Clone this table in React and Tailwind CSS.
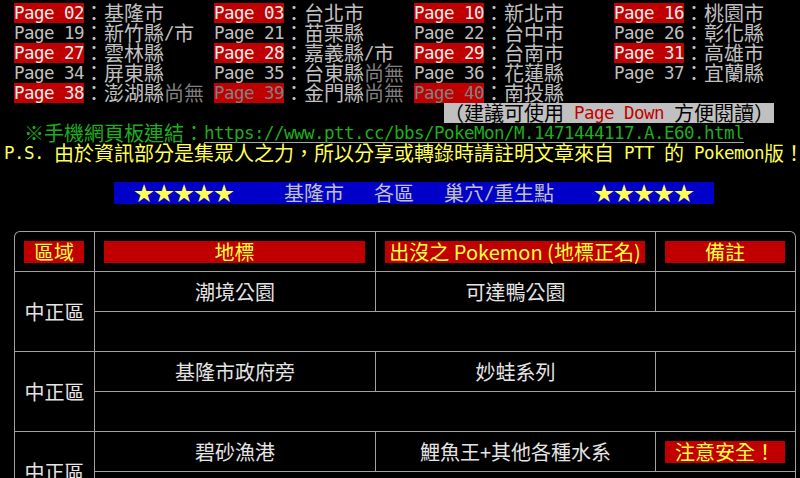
import React from "react";

const WIDE = /[\u2E80-\u9FFF\uF900-\uFAFF\uFE30-\uFE4F\uFF00-\uFF60\u203B\u2605]/;

// display width in terminal columns (CJK = 2, ascii = 1)
const width = (s) => [...s].reduce((n, ch) => n + (WIDE.test(ch) ? 2 : 1), 0);

// splits a string into ascii / full-width runs so each run gets its own font
function T({ s }) {
  const runs = [];
  for (const ch of s) {
    const w = WIDE.test(ch);
    const last = runs[runs.length - 1];
    if (last && last.w === w) last.t += ch;
    else runs.push({ w, t: ch });
  }
  return runs.map((r, i) =>
    r.w ? (
      <span key={i} className="relative top-[2px] tracking-normal font-['Noto_Sans_CJK_TC',sans-serif] text-[20px] leading-[14px]">
        {r.t}
      </span>
    ) : (
      <span key={i}>{r.t}</span>
    )
  );
}

function Box({ className = "", children }) {
  return <span className={"inline-block h-[20px] align-top " + className}>{children}</span>;
}

function Group({ n, name, note, hl, dim }) {
  const used = 7 + width("：" + name + (note || ""));
  const tone = hl ? (dim ? "bg-[#c00000] text-[#808080]" : "bg-[#c00000] text-[#ececec]") : "";
  return (
    <>
      <Box className={tone}>Page {n}</Box>
      <T s={"：" + name} />
      {note && (
        <span className="text-[#808080]">
          <T s={note} />
        </span>
      )}
      <span>{" ".repeat(Math.max(0, 20 - used))}</span>
    </>
  );
}

const pages = [
  [
    { n: "02", name: "基隆市", hl: true },
    { n: "03", name: "台北市", hl: true },
    { n: "10", name: "新北市", hl: true },
    { n: "16", name: "桃園市", hl: true },
  ],
  [
    { n: "19", name: "新竹縣/市" },
    { n: "21", name: "苗栗縣" },
    { n: "22", name: "台中市" },
    { n: "26", name: "彰化縣" },
  ],
  [
    { n: "27", name: "雲林縣", hl: true },
    { n: "28", name: "嘉義縣/市", hl: true },
    { n: "29", name: "台南市", hl: true },
    { n: "31", name: "高雄市", hl: true },
  ],
  [
    { n: "34", name: "屏東縣" },
    { n: "35", name: "台東縣", note: "尚無" },
    { n: "36", name: "花蓮縣" },
    { n: "37", name: "宜蘭縣" },
  ],
  [
    { n: "38", name: "澎湖縣", note: "尚無", hl: true },
    { n: "39", name: "金門縣", note: "尚無", hl: true, dim: true },
    { n: "40", name: "南投縣", hl: true, dim: true },
  ],
];

const rows = [
  { area: "中正區", spot: "潮境公園", mon: "可達鴨公園" },
  { area: "中正區", spot: "基隆市政府旁", mon: "妙蛙系列" },
  { area: "中正區", spot: "碧砂漁港", mon: "鯉魚王+其他各種水系", note: "注意安全！" },
];

function Line({ children }) {
  return <div className="h-[20px] leading-[20px] whitespace-pre">{children}</div>;
}

function Head({ children, className = "" }) {
  return (
    <div className={"bg-black flex items-center pl-[9px] pr-[10px] " + className}>
      <div className="flex-1 h-[22px] bg-[#c00000] text-[#ffff40] flex items-center justify-center leading-none whitespace-pre">
        {children}
      </div>
    </div>
  );
}

export default function App() {
  return (
    <div className="w-[800px] h-[478px] overflow-hidden bg-black text-[#c0c0c0]">
      <div className="pt-[3px] pl-[4px] font-['DejaVu_Sans_Mono','Noto_Sans_CJK_TC',monospace] text-[17.5px] tracking-[-0.536px]">
        {pages.map((line, i) => (
          <Line key={i}>
            <span> </span>
            {line.map((g) => (
              <Group key={g.n} {...g} />
            ))}
          </Line>
        ))}

        <Line>
          <span>{" ".repeat(44)}</span>
          <Box className="bg-[#c0c0c0] text-black">
            <T s="（建議可使用 " />
            <span className="text-[#c00000]">Page Down</span>
            <T s=" 方便閱讀）" />
          </Box>
        </Line>

        <Line>
          <span className="text-[#1eae1e]">
            <span>  </span>
            <T s="※手機網頁板連結：" />
            <Box className="border-b border-[#a8a8a8]">https://www.ptt.cc/bbs/PokeMon/M.1471444117.A.E60.html</Box>
          </span>
        </Line>

        <Line>
          <span className="text-[#ffff55]">
            <T s="P.S. 由於資訊部分是集眾人之力，所以分享或轉錄時請註明文章來自 PTT 的 Pokemon版！" />
          </span>
        </Line>

        <Line> </Line>

        <Line>
          <span>{" ".repeat(11)}</span>
          <Box className="bg-[#0000c8] h-[22px] -mt-px pt-px">
            <span>  </span>
            <span className="text-[#ffff55]">
              <T s="★★★★★" />
            </span>
            <T s="     基隆市   各區   巢穴/重生點    " />
            <span className="text-[#ffff55]">
              <T s="★★★★★" />
            </span>
            <span>  </span>
          </Box>
        </Line>
      </div>

      <div className="ml-[14px] mt-[28px] w-[782px] grid grid-cols-[79px_280px_279px_139px] auto-rows-[39px] gap-px p-px bg-[#a0a0a0] rounded-[6px] font-['Noto_Sans_CJK_TC',sans-serif] text-[20px] text-[#e4e4e4]">
        <Head className="rounded-tl-[5px]">區域</Head>
        <Head>地標</Head>
        <Head>出沒之 Pokemon (地標正名)</Head>
        <Head className="rounded-tr-[5px]">備註</Head>

        {rows.map((r, i) => (
          <React.Fragment key={i}>
            <div className="row-span-2 bg-black flex items-center justify-center leading-none">{r.area}</div>
            <div className="bg-black flex items-center justify-center leading-none">{r.spot}</div>
            <div className="bg-black flex items-center justify-center leading-none">{r.mon}</div>
            {r.note ? (
              <Head>{r.note}</Head>
            ) : (
              <div className="bg-black" />
            )}
            <div className="col-span-3 bg-black" />
          </React.Fragment>
        ))}
      </div>
    </div>
  );
}
